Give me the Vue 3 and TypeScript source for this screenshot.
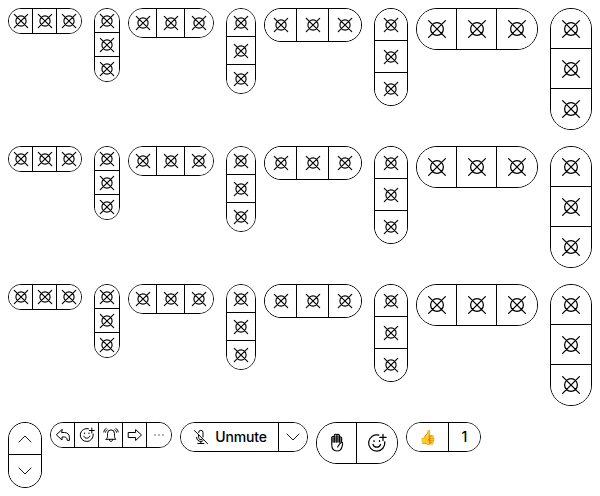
<script setup lang="ts">
type Orientation = 'horizontal' | 'vertical'

interface Cell {
  icon?: string
  label?: string
  kind?: string
}

interface Group {
  size: number
  orientation: Orientation
  cells: Cell[]
}

const sizes: number[] = [24, 28, 32, 40]
const placeholders: Cell[] = [{ icon: 'placeholder' }, { icon: 'placeholder' }, { icon: 'placeholder' }]
const rows: number[] = [1, 2, 3]

const examples: Group[] = [
  { size: 32, orientation: 'vertical', cells: [{ icon: 'up' }, { icon: 'down' }] },
  {
    size: 24,
    orientation: 'horizontal',
    cells: [{ icon: 'reply' }, { icon: 'reaction' }, { icon: 'alert' }, { icon: 'forward' }, { icon: 'more' }],
  },
  {
    size: 28,
    orientation: 'horizontal',
    cells: [{ icon: 'muted', label: 'Unmute', kind: 'mute' }, { icon: 'down' }],
  },
  { size: 40, orientation: 'horizontal', cells: [{ icon: 'hand' }, { icon: 'reaction' }] },
  {
    size: 28,
    orientation: 'horizontal',
    cells: [{ label: '👍', kind: 'emoji' }, { label: '1', kind: 'count' }],
  },
]

const paths: Record<string, string> = {
  placeholder: 'M1.3 1.3 14.7 14.7M14.7 1.3 1.3 14.7M13.1 8A5.1 5.1 0 1 1 2.9 8A5.1 5.1 0 1 1 13.1 8Z',
  up: 'M2 11 8 5l6 6',
  down: 'M2 5l6 6 6-6',
  reply: 'M7 2.6 1.3 7.8 7 13V10h2.3c1.6 0 2.6.8 3 3.4h2.1V10.4c0-2.9-1.9-4.9-4.9-4.9H7Z',
  reaction:
    'M9.5 1.7A6.5 6.5 0 1 0 14.2 7M12.8 1v5M10.3 3.5h5M4.8 9.2c.8 2.8 5.2 2.8 6 0M5.6 6v.7M10 6v.7',
  alert:
    'M3.2 12.3h9.6c-1-1.1-1.3-2-1.3-3.5V6.4a3.5 3.5 0 0 0-7 0v2.4c0 1.5-.3 2.4-1.3 3.5ZM6.3 12.5c0 2.7 3.4 2.7 3.4 0M3.2 1.4C1.8 2.2 1 3.4.8 5M4.2 2.8C3.2 3.4 2.6 4.2 2.5 5.2M12.8 1.4c1.4.8 2.2 2 2.4 3.6M11.8 2.8c1 .6 1.6 1.4 1.7 2.4',
  forward: 'M1.6 5.5h7V2.5l5.9 5.5-5.9 5.5v-3h-7Z',
  more: 'M3.8 8h.4M7.8 8h.4M11.8 8h.4',
  muted:
    'M1.4 1.5 14.6 14.7M5.6 6V8.5a2.2 2.2 0 0 0 3.6 1.7M5.6 3.5a2.2 2.2 0 0 1 4.4 0V8M3.6 8.3c0 2.6 1.7 4.1 4.2 4.1.9 0 1.7-.2 2.3-.7M7.8 12.4v2.1M4.8 14.5h6',
  hand: 'M3.8 9.2V4a1.1 1.1 0 0 1 2-.7V2a1.1 1.1 0 0 1 2.1-.3A1.1 1.1 0 0 1 10 2.2v1.2a1 1 0 0 1 1.7.7V7.2c.7.1.9.7.8 1.5l-.4 2c-.5 2.4-1.8 3.7-4.1 3.7-2.7 0-4.2-1.7-4.2-5.2ZM5.8 3.3v4M7.9 2v5.3M9.9 3.3v4M11.6 7.4 10 8.9l-1.5 2.3',
}

const iconSize = (size: number): number => (size === 40 ? 20 : 16)
const orientations: Orientation[] = ['horizontal', 'vertical']
</script>

<template>
  <main class="page">
    <section v-for="row in rows" :key="row" class="row">
      <div v-for="size in sizes" :key="size" class="pair">
        <div v-for="o in orientations" :key="o" class="group" :class="[o, 's' + size]">
          <button v-for="(cell, i) in placeholders" :key="i" class="cell" type="button">
            <svg class="placeholder" :width="iconSize(size)" :height="iconSize(size)" viewBox="0 0 16 16">
              <path :d="paths[cell.icon!]" />
            </svg>
          </button>
        </div>
      </div>
    </section>
    <section class="row examples">
      <div v-for="(group, g) in examples" :key="g" class="group" :class="[group.orientation, 's' + group.size]">
        <button v-for="(cell, i) in group.cells" :key="i" class="cell" :class="cell.kind" type="button">
          <svg
            v-if="cell.icon"
            :class="cell.icon"
            :width="iconSize(group.size)"
            :height="iconSize(group.size)"
            viewBox="0 0 16 16"
          >
            <path :d="paths[cell.icon]" />
            <path v-if="cell.icon === 'hand'" class="fingers" d="M3.8 7.6V3.6h2V2h4.2v1.5h1.7v4.1Z" />
          </svg>
          <span v-if="cell.label">{{ cell.label }}</span>
        </button>
      </div>
    </section>
  </main>
</template>

<style>
body {
  background: #fff;
}
</style>

<style scoped>
.page {
  display: flex;
  flex-direction: column;
  gap: 16px;
  padding: 8px;
}
.row {
  display: flex;
  align-items: flex-start;
  gap: 8px;
}
.pair {
  display: flex;
  align-items: flex-start;
  gap: 12px;
}
.group {
  display: flex;
  flex: none;
  border: 1px solid #000;
  overflow: hidden;
}
.vertical {
  flex-direction: column;
}
.s24 { --size: 24px; border-radius: 13px; }
.s28 { --size: 28px; border-radius: 15px; }
.s32 { --size: 32px; border-radius: 17px; }
.s40 { --size: 40px; border-radius: 21px; }
.cell {
  display: flex;
  flex: none;
  align-items: center;
  justify-content: center;
  box-sizing: border-box;
  width: var(--size);
  height: var(--size);
  padding: 0;
  border: 0;
  background: #fff;
  color: #000;
  font: 500 14px/20px Inter, "Liberation Sans", sans-serif;
}
.horizontal > .cell:not(:last-child) {
  box-shadow: inset -1px 0 #000;
}
.vertical > .cell:not(:last-child) {
  box-shadow: inset 0 -1px #000;
}
svg {
  display: block;
  flex: none;
  fill: none;
  stroke: #000;
  stroke-width: 1;
  stroke-linecap: round;
  stroke-linejoin: round;
}
svg.placeholder {
  stroke-width: 1.15;
}
.s40 svg.placeholder {
  stroke-width: 1;
}
svg.up,
svg.down {
  stroke-width: 0.9;
}
.fingers {
  fill: rgba(0, 0, 0, 0.55);
  stroke: none;
}
svg.hand {
  stroke-width: 0.9;
}
.mute {
  width: 98px;
  gap: 6px;
  letter-spacing: -0.15px;
}
.emoji {
  width: 42px;
  font-family: "Noto Color Emoji", sans-serif;
}
.count {
  width: 31px;
}
</style>
